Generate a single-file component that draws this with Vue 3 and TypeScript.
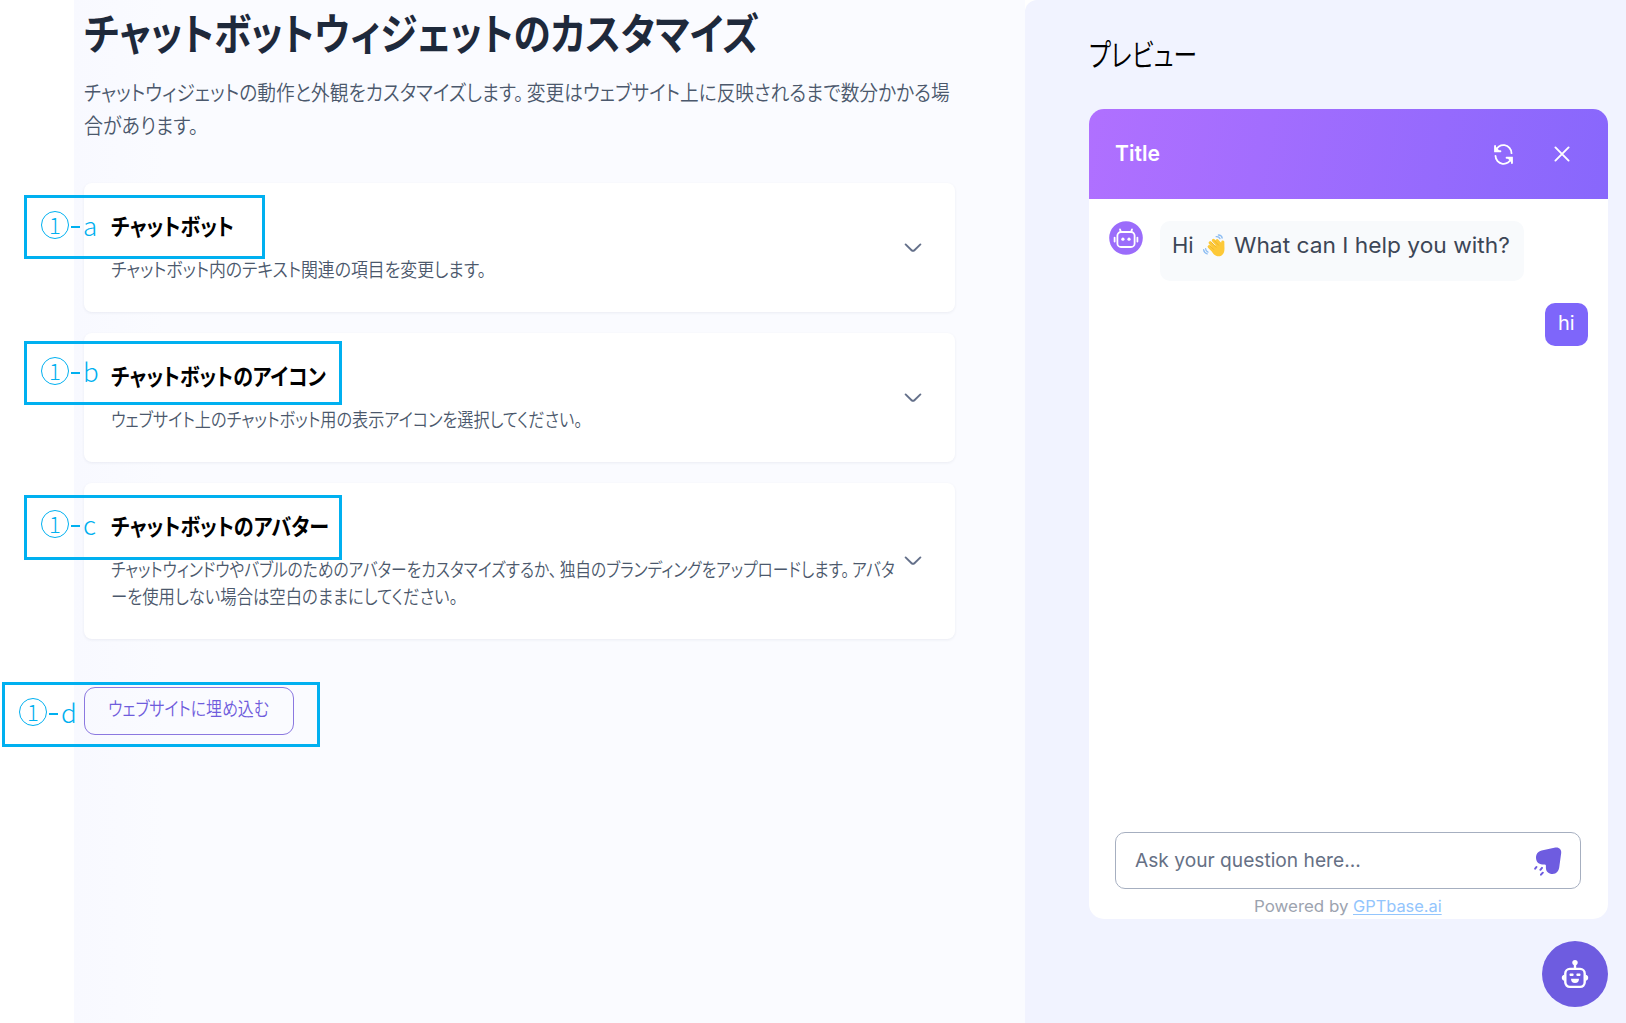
<script setup lang="ts">
import type { Directive } from 'vue'

interface Section {
  title: string
  titleWidth: number
  lines: { text: string; width: number }[]
}

interface Marker {
  id: string
  label: string
}

const intro = [
  { text: 'チャットウィジェットの動作と外観をカスタマイズします。変更はウェブサイト上に反映されるまで数分かかる場', width: 866 },
  { text: '合があります。', width: 114 },
]

const sections: Section[] = [
  {
    title: 'チャットボット',
    titleWidth: 123,
    lines: [{ text: 'チャットボット内のテキスト関連の項目を変更します。', width: 375 }],
  },
  {
    title: 'チャットボットのアイコン',
    titleWidth: 215,
    lines: [{ text: 'ウェブサイト上のチャットボット用の表示アイコンを選択してください。', width: 471 }],
  },
  {
    title: 'チャットボットのアバター',
    titleWidth: 218,
    lines: [
      { text: 'チャットウィンドウやバブルのためのアバターをカスタマイズするか、独自のブランディングをアップロードします。アバタ', width: 784 },
      { text: 'ーを使用しない場合は空白のままにしてください。', width: 347 },
    ],
  },
]

const markers: Marker[] = [
  { id: 'a', label: 'a' },
  { id: 'b', label: 'b' },
  { id: 'c', label: 'c' },
  { id: 'd', label: 'd' },
]

// Splits after full stops and commas so that each clause can carry its own trailing gap.
const clauses = (text: string): string[] => text.split(/(?<=[。、])/)

// Condenses or widens a line of text to the given width.
const vFit: Directive<HTMLElement, number> = {
  mounted(el, binding) {
    const natural = el.offsetWidth
    if (natural > 0) el.style.transform = `scaleX(${binding.value / natural})`
  },
}
</script>

<template>
  <div class="page">
    <main class="settings">
      <h1><span v-fit="675" class="fit">チャットボットウィジェットのカスタマイズ</span></h1>
      <p class="intro">
        <span v-for="l in intro" :key="l.text" v-fit="l.width" class="fit"><span v-for="c in clauses(l.text)" :key="c" class="clause">{{ c }}</span></span>
      </p>
      <div class="cards">
        <section v-for="s in sections" :key="s.title" class="card">
          <div class="card-text">
            <h2><span v-fit="s.titleWidth" class="fit">{{ s.title }}</span></h2>
            <p>
              <span v-for="l in s.lines" :key="l.text" v-fit="l.width" class="fit"><span v-for="c in clauses(l.text)" :key="c" class="clause">{{ c }}</span></span>
            </p>
          </div>
          <svg class="chevron" width="18" height="10" viewBox="0 0 18 10">
            <path d="M1.6 1.4 7.6 7.2Q9 8.5 10.4 7.2L16.4 1.4" />
          </svg>
        </section>
      </div>
      <button class="embed"><span v-fit="161" class="fit">ウェブサイトに埋め込む</span></button>
    </main>

    <aside class="preview">
      <h3><span v-fit="108" class="fit">プレビュー</span></h3>
      <div class="widget">
        <header>
          <span v-fit="45" class="fit title">Title</span>
          <svg class="refresh" width="21" height="21" viewBox="0 0 22 22">
            <path d="M2.2 2v5.6h5.6M2.6 7.2A8.6 8.6 0 0 1 19.4 9.6M19.8 20v-5.6h-5.6M19.4 14.8A8.6 8.6 0 0 1 2.6 12.4" />
            <path class="solid" d="M1.6 1.6v6.6h6.2zM20.4 20.4v-6.6h-6.2z" />
          </svg>
          <svg class="close" width="16" height="16" viewBox="0 0 16 16">
            <path d="M1.4 1.4 14.6 14.6M14.6 1.4 1.4 14.6" />
          </svg>
        </header>
        <div class="chat">
          <div class="row">
            <svg class="avatar" width="34" height="34" viewBox="0 0 34 34">
              <circle cx="17" cy="17" r="16.8" fill="#9b6cfb" />
              <g fill="none" stroke="#fff" stroke-width="1.8" stroke-linecap="round">
                <rect x="8.4" y="11" width="17.2" height="15" rx="3.6" />
                <path d="M11.8 10.6 11 8.4M22.2 10.6 23 8.4M5.6 16.6v4M28.4 16.6v4" />
              </g>
              <circle cx="13.9" cy="18.2" r="1.6" fill="#fff" />
              <circle cx="20" cy="18.2" r="1.6" fill="#fff" />
            </svg>
            <div class="bubble">
              <span v-fit="20" class="fit hi-word">Hi</span>
              <svg class="wave" width="24" height="24" viewBox="0 0 24 24">
                <g fill="none" stroke="#fdc938" stroke-width="3.2" stroke-linecap="round">
                  <path d="M7.2 12.6 12.4 18M8.2 8.8 14.6 15.4M11.4 6.4 17 12.4M15.2 6.8 19 11" />
                  <path d="M20.8 8.2 20.2 14" />
                </g>
                <path fill="#fdc938" d="M8.4 14.6 18.4 8.6 22.2 9.4C22.6 13.8 23 18.2 20.4 20.8 17.6 23.6 13.2 22.2 11 19.2z" />
                <g fill="none" stroke="#e8a61c" stroke-width=".6" stroke-linecap="round">
                  <path d="M9.6 8.6 14 13.2M12.8 7 16.6 11.2M8.2 12 11.6 15.4" />
                </g>
                <g fill="none" stroke="#8dbdf2" stroke-width="1.3" stroke-linecap="round">
                  <path d="M14.2 2.6Q16.8 2.2 18 4.6M16.4 1Q19.6 1 20.2 4M3.6 14.6Q3.6 17.2 6 18.2M1.6 15.6Q2 19 5.2 19.8" />
                </g>
              </svg>
              <span v-fit="276" class="fit">What can I help you with?</span>
            </div>
          </div>
          <div class="mine"><span v-fit="17" class="fit">hi</span></div>
        </div>
        <div class="input">
          <span v-fit="226" class="fit">Ask your question here...</span>
          <svg width="30" height="30" viewBox="0 0 30 30">
            <path fill="#6e5ce0" d="M8.6 4.4 22.4 1.6C26 1 28.6 3.6 28.2 7L26.2 21.6C25.6 25.2 23.6 28 19.6 28 15.6 28 13 25.6 12.9 22V19.6Q12.8 18.6 11.6 18.5H9.4C5.4 18.3 3 15.4 3 11.8 3 8 5 5.2 8.6 4.4Z" />
            <path d="M2.2 22.6 3.4 21M7.4 23.8 9 21.9M8 28.7 9.8 26.7" fill="none" stroke="#6e5ce0" stroke-width="2" stroke-linecap="round" />
          </svg>
        </div>
        <footer>
          <span v-fit="94" class="fit powered">Powered by</span>
          <a v-fit="89" class="fit">GPTbase.ai</a>
        </footer>
      </div>
      <button class="launcher">
        <svg width="28" height="30" viewBox="0 0 28 30">
          <g fill="none" stroke="#fff" stroke-width="2.4">
            <rect x="4.3" y="9.9" width="19.4" height="18" rx="4.6" />
            <path d="M14 9.6V4" />
          </g>
          <g fill="#fff">
            <circle cx="14" cy="3.6" r="2.7" />
            <path d="M3.6 15.8v6Q.8 21.4.8 18.8T3.6 15.8ZM24.4 15.8v6q2.8-.4 2.8-3T24.4 15.8Z" />
            <rect x="8.6" y="14.6" width="3.9" height="2.3" rx=".6" />
            <rect x="15.5" y="14.6" width="3.9" height="2.3" rx=".6" />
            <path d="M10 19.8h8q0 4.2-4 4.2t-4-4.2Z" />
          </g>
        </svg>
      </button>
    </aside>

    <div v-for="m in markers" :key="m.id" class="marker" :class="'marker-' + m.id">
      <span class="ring">1</span><span class="dash"></span><span class="letter">{{ m.label }}</span>
    </div>
  </div>
</template>

<style>
body {
  margin: 0;
  background: #fff;
}
</style>

<style scoped>
.page {
  position: relative;
  box-sizing: border-box;
  display: flex;
  width: 1626px;
  height: 1023px;
  padding-left: 74px;
  overflow: hidden;
  font-family: "Noto Sans CJK JP", sans-serif;
  font-feature-settings: "palt" 1;
}
h1, h2, h3, p { margin: 0; }
.fit {
  display: block;
  width: max-content;
  white-space: nowrap;
  transform-origin: 0 50%;
}
.clause:not(:last-child) { margin-right: 0.18em; }
.settings {
  box-sizing: border-box;
  width: 951px;
  padding: 0 70px 0 10px;
  background: linear-gradient(90deg, #f8f9ff, #fafbff 90px);
}
h1 {
  font-size: 43px;
  line-height: 63px;
  font-weight: 700;
  color: #1e293b;
}
.intro {
  margin-top: 12px;
  font-size: 21px;
  line-height: 33px;
  font-weight: 350;
  color: #4b586c;
}
.cards {
  display: flex;
  flex-direction: column;
  gap: 21px;
  margin-top: 42px;
}
.card {
  display: flex;
  align-items: center;
  box-sizing: border-box;
  height: 129px;
  padding-left: 27px;
  background: #fff;
  border-radius: 8px;
  box-shadow: 0 1px 3px rgba(30, 41, 90, 0.07);
}
.card:last-child { height: 156px; }
.card-text {
  width: 793px;
  flex: none;
  padding-bottom: 4px;
}
.card h2 {
  font-size: 23px;
  line-height: 32px;
  font-weight: 700;
  color: #000;
}
.card p {
  margin-top: 14px;
  font-size: 19px;
  line-height: 27px;
  font-weight: 350;
  color: #4b586c;
}
.chevron {
  fill: none;
  stroke: #64708a;
  stroke-width: 1.9;
  stroke-linecap: round;
}
.embed {
  display: block;
  box-sizing: border-box;
  width: 210px;
  height: 48px;
  margin-top: 48px;
  padding: 0 0 7px 23px;
  border: 1.4px solid #8b78e0;
  border-radius: 11px;
  background: transparent;
  font: inherit;
  font-size: 19px;
  line-height: 27px;
  font-weight: 350;
  text-align: left;
  color: #6f5cdc;
}
.preview {
  box-sizing: border-box;
  display: flex;
  flex-direction: column;
  width: 601px;
  padding: 33px 18px 0 64px;
  border-top-left-radius: 12px;
  background: #f1f3ff;
}
.preview h3 {
  height: 76px;
  font-size: 31px;
  line-height: 40px;
  font-weight: 350;
  color: #000;
}
.widget {
  display: flex;
  flex-direction: column;
  height: 810px;
  border-radius: 15px;
  overflow: hidden;
  background: #fff;
  font-family: Inter, sans-serif;
  font-feature-settings: normal;
}
header {
  display: flex;
  align-items: center;
  height: 90px;
  padding: 0 38px 0 26px;
  background: linear-gradient(100deg, #b070ff, #8867fc);
}
.title {
  margin-right: auto;
  padding-bottom: 3px;
  font-size: 22px;
  font-weight: 600;
  color: #fff;
}
header svg {
  fill: none;
  stroke: #fff;
  stroke-width: 1.9;
  stroke-linecap: round;
}
header .solid {
  fill: #fff;
  stroke: none;
}
.refresh { margin-right: 40px; }
.chat {
  display: flex;
  flex: 1;
  flex-direction: column;
  padding: 22px 20px 0 20px;
}
.row {
  display: flex;
  gap: 17px;
}
.bubble {
  display: flex;
  box-sizing: border-box;
  width: 364px;
  height: 60px;
  padding: 9px 12px;
  border-radius: 10px;
  background: #f8fafc;
  font-size: 22px;
  line-height: 30px;
  color: #3c4656;
}
.hi-word {
  width: 20px;
}
.wave {
  flex: none;
  margin: 4px 8px 0 10px;
}
.mine {
  align-self: flex-end;
  box-sizing: border-box;
  width: 43px;
  height: 43px;
  margin-top: 22px;
  padding: 7px 13px;
  border-radius: 10px;
  background: #7e66fa;
  font-size: 20px;
  line-height: 26px;
  color: #fff;
}
.input {
  display: flex;
  align-items: center;
  justify-content: space-between;
  box-sizing: border-box;
  height: 57px;
  margin: 0 27px 0 26px;
  padding: 0 17px 0 19px;
  border: 1.5px solid #a6afc0;
  border-radius: 10px;
  font-size: 19px;
  color: #667085;
}
footer {
  display: flex;
  height: 30px;
  padding-left: 165px;
  font-size: 16px;
  line-height: 35px;
  color: #9ca3af;
}
.powered { margin-right: 10px; }
footer a {
  color: #93c5fd;
  text-decoration: underline;
  text-underline-offset: 2px;
}
.launcher {
  display: flex;
  align-items: center;
  justify-content: center;
  align-self: flex-end;
  width: 66px;
  height: 66px;
  margin-top: 22px;
  padding: 0;
  border: 0;
  border-radius: 50%;
  background: #6e5ce0;
}
/* Numbered callouts drawn over the page */
.marker {
  position: absolute;
  left: 24px;
  box-sizing: border-box;
  display: flex;
  align-items: center;
  width: 318px;
  height: 64px;
  padding: 0 0 5px 14px;
  border: 3px solid #00b0f0;
  color: #00b0f0;
  font-family: "Noto Sans CJK JP", sans-serif;
  font-weight: 300;
}
.marker-a { top: 195px; width: 241px; }
.marker-b { top: 341px; }
.marker-c { top: 495px; height: 65px; padding-bottom: 8px; }
.marker-d { top: 682px; left: 2px; height: 65px; padding-bottom: 6px; }
.ring {
  box-sizing: border-box;
  width: 28px;
  height: 28px;
  border: 1.2px solid #00b0f0;
  border-radius: 50%;
  font-size: 22px;
  line-height: 25px;
  text-align: center;
}
.dash {
  width: 9px;
  height: 2px;
  margin: 4px 3px 0 2px;
  background: #00b0f0;
}
.letter {
  font-size: 26px;
  line-height: 30px;
}
</style>
